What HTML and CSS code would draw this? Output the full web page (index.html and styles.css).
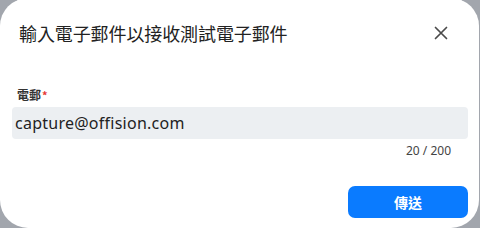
FILE: index.html
```html
<!DOCTYPE html>
<html>
<head>
  <link rel="stylesheet" href="styles.css">
</head>
<body>
  <div class="dialog">
    <!-- 標題列 -->
    <div class="dialog-header">
      <div class="dialog-title">輸入電子郵件以接收測試電子郵件</div>
      <button class="close-btn" aria-label="close">
        <svg width="14" height="14" viewBox="0 0 14 14">
          <path d="M1.5 1.5 L12.5 12.5 M12.5 1.5 L1.5 12.5" stroke="#4a4a4a" stroke-width="1.7" stroke-linecap="round"/>
        </svg>
      </button>
    </div>

    <!-- 表單欄位 -->
    <div class="field">
      <label class="field-label">電郵<span class="required">*</span></label>
      <div class="field-input">capture@offision.com</div>
      <div class="field-count">20 / 200</div>
    </div>

    <div class="dialog-footer">
      <button class="send-btn">傳送</button>
    </div>
  </div>
</body>
</html>
```

FILE: styles.css
```css
/* 背景遮罩 */
body {
  margin: 0;
  background: #a2a6ad;
  width: 480px;
  height: 228px;
  overflow: hidden;
}

/* 對話框 */
.dialog {
  width: 479px;
  height: 230px;
  margin-top: -2px;
  background: #fff;
  border-radius: 28px;
  box-sizing: border-box;
  padding: 0 11px 0 12px;
  font-family: "Noto Sans CJK TC", sans-serif;
}

.dialog-header {
  height: 70px;
  display: flex;
  align-items: center;
  justify-content: space-between;
  padding-left: 7px;
  padding-right: 20px;
}

.dialog-title {
  font-size: 18px;
  color: #222;
  letter-spacing: -0.1px;
}

.close-btn {
  border: none;
  background: none;
  padding: 0;
  width: 14px;
  height: 14px;
  display: flex;
}

/* 欄位 */
.field {
  display: flex;
  flex-direction: column;
  padding-top: 19px;
}

.field-label {
  font-size: 12px;
  font-weight: bold;
  color: #333;
  line-height: 15px;
  padding-left: 5px;
}

.required {
  color: #e53935;
  margin-left: 1px;
  font-size: 11px;
}

.field-input {
  margin-top: 4px;
  height: 32px;
  line-height: 32px;
  background: #eceff2;
  border-radius: 4px;
  padding-left: 3px;
  font-family: "Noto Sans", sans-serif;
  font-size: 16px;
  letter-spacing: 0.25px;
  color: #222;
}

.field-count {
  align-self: flex-end;
  margin-top: 4px;
  margin-right: 17px;
  font-family: "Noto Sans", sans-serif;
  font-size: 12px;
  line-height: 16px;
  color: #444;
}

/* 底部按鈕 */
.dialog-footer {
  display: flex;
  justify-content: flex-end;
  margin-top: 27px;
}

.send-btn {
  width: 120px;
  height: 32px;
  border: none;
  border-radius: 7px;
  background: #0a7bff;
  color: #fff;
  font-family: "Noto Sans CJK TC", sans-serif;
  font-size: 14px;
  font-weight: bold;
}
```
